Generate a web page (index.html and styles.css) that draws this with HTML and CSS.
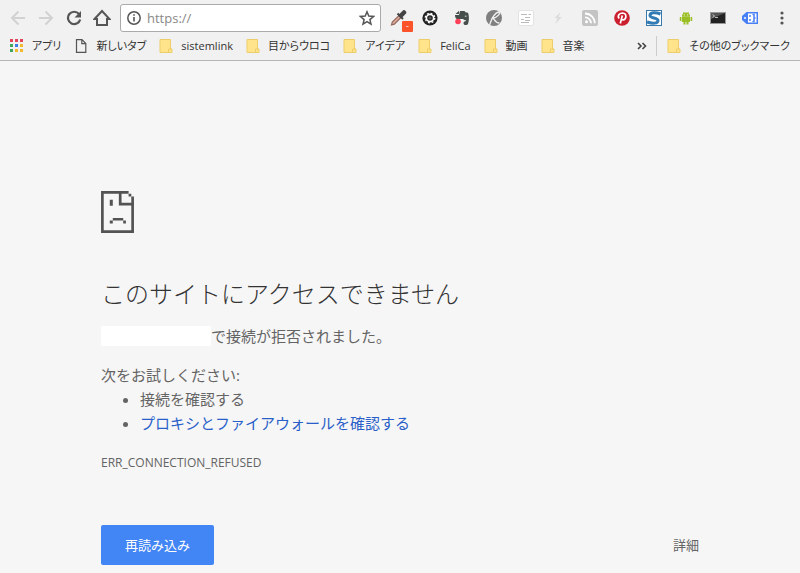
FILE: index.html
```
<!DOCTYPE html>
<html lang="ja">
<head>
    <meta charset="UTF-8">
    <meta name="viewport" content="width=device-width, initial-scale=1.0">
    <title>このサイトにアクセスできません</title>
    <link rel="stylesheet" href="styles.css">
</head>
<body>
    <svg class="symbols" width="0" height="0">
        <symbol id="folder" viewBox="0 0 14 14">
            <path d="M1 .5h10.500v9.500h1.500v3.500h-12z" fill="#ffe48b" stroke="#edcd6b"/>
            <path d="M9.500 13v-3h3" fill="none" stroke="#edcd6b"/>
        </symbol>
    </svg>

    <header>
        <div class="toolbar">
            <button class="nav-button" aria-label="戻る">
                <svg width="16" height="16" viewBox="0 0 16 16"><path d="M15 8H2M8.500 1.500L2 8l6.500 6.500" fill="none" stroke="#d2d2d2" stroke-width="2"/></svg>
            </button>
            <button class="nav-button" aria-label="進む">
                <svg width="16" height="16" viewBox="0 0 16 16"><path d="M1 8h13M7.500 1.500L14 8l-6.500 6.500" fill="none" stroke="#d2d2d2" stroke-width="2"/></svg>
            </button>
            <button class="nav-button" aria-label="再読み込み">
                <svg width="16" height="16" viewBox="0 0 16 16"><path d="M13 4A6.200 6.200 0 1 0 14.200 9.500" fill="none" stroke="#555" stroke-width="2.200"/><path d="M15 1v6.500H8.500z" fill="#555"/></svg>
            </button>
            <button class="nav-button" aria-label="ホーム">
                <svg width="18" height="18" viewBox="0 0 18 18"><path d="M1.500 10L9 2l7.500 8H14v6H4v-6z" fill="none" stroke="#555" stroke-width="2"/></svg>
            </button>

            <div class="address-bar">
                <svg width="14" height="14" viewBox="0 0 14 14"><circle cx="7" cy="7" r="6.200" fill="none" stroke="#555" stroke-width="1.500"/><path d="M7 6v4.500M7 3.200v1.600" stroke="#555" stroke-width="1.600"/></svg>
                <input type="text" value="https://" aria-label="アドレス">
                <button class="star-button" aria-label="ブックマークに追加">
                    <svg width="16" height="16" viewBox="0 0 16 16"><path d="M8 1.800l1.800 4.300 4.700.4-3.600 3.100 1.100 4.600L8 11.700l-4 2.500 1.100-4.600L1.500 6.500l4.700-.4z" fill="none" stroke="#555" stroke-width="1.500"/></svg>
                </button>
            </div>

            <div class="extensions">
                <button class="extension" aria-label="カラーピッカー">
                    <svg width="18" height="18" viewBox="0 0 18 18"><path d="M2.500 16l.8-3 6.700-6.500 2 2-6.700 6.700z" fill="#dcaa9c" stroke="#94685c" stroke-width="1.200"/><path d="M8.500 4.500l5.500 5.500" stroke="#444" stroke-width="2"/><path d="M12 6.500L15 3.500" stroke="#444" stroke-width="4.500" stroke-linecap="round"/></svg>
                    <span class="badge">-</span>
                </button>
                <button class="extension" aria-label="設定">
                    <svg width="16" height="16" viewBox="0 0 16 16"><circle cx="8" cy="8" r="7.600" fill="#222"/><circle cx="8" cy="8" r="3.600" fill="none" stroke="#fff" stroke-width="1.600"/><circle cx="8" cy="8" r="4.800" fill="none" stroke="#fff" stroke-width="1.200" stroke-dasharray="1.900 1.870"/><circle cx="8" cy="8" r="1.600" fill="#555"/></svg>
                </button>
                <button class="extension" aria-label="クリップ">
                    <svg width="16" height="16" viewBox="0 0 16 16"><path d="M6 1h4.500l1 1.200 2.500.6c1.300 3 1.200 8.500 0 11.200-1 1.700-4.500 1.400-4.500-.8 0-1.600 1-2 2.200-2V10c-1.500.3-2-.5-2.700-1H3C1.500 8.500 1 6.500 1 5h4z" fill="#474f4c"/><path d="M1.500 4L5 .8V4z" fill="#474f4c"/><path d="M10.800 6.200h1.700" stroke="#d5d5d5"/><circle cx="4" cy="11.500" r="2.800" fill="#ff4058"/></svg>
                </button>
                <button class="extension" aria-label="ライブラリ">
                    <svg width="18" height="18" viewBox="0 0 18 18"><circle cx="9" cy="9" r="8" fill="#808080"/><path d="M4.500 16C6.500 10 9 4 13.500 3c2.500.5 0 5.500-7 6.500M8.500 9.500c1.500 2 2.500 4.500 6 4.500" fill="none" stroke="#f0f0f0" stroke-width="1.300"/></svg>
                </button>
                <button class="extension" aria-label="リーダー">
                    <svg width="16" height="16" viewBox="0 0 16 16"><rect x=".5" y=".5" width="15" height="15" rx="1.500" fill="#fff" stroke="#e3e3e3"/><path d="M3 4.500h6M10.500 4.500H13M7 7.500h5M3 9.500h3M7 10.500h5M3 12.500h8" stroke="#bbb"/></svg>
                </button>
                <button class="extension" aria-label="高速表示">
                    <svg width="16" height="16" viewBox="0 0 16 16"><path d="M10.500 2l-6 6h3L5 14l7-7H8.500z" fill="#dcdcdc"/></svg>
                </button>
                <button class="extension" aria-label="フィード">
                    <svg width="16" height="16" viewBox="0 0 16 16"><rect width="16" height="16" rx="2" fill="#c4c4c4"/><circle cx="4.500" cy="11.800" r="1.500" fill="#fff"/><path d="M3 7.300a6 6 0 0 1 6 6M3 3.500a9.800 9.800 0 0 1 9.800 9.800" fill="none" stroke="#fff" stroke-width="1.800"/></svg>
                </button>
                <button class="extension" aria-label="ピン">
                    <svg width="16" height="16" viewBox="0 0 16 16"><circle cx="8" cy="8" r="7.800" fill="#cb1f2e"/><path d="M6.300 13.500L8.300 5.500M5 8.500C3 5 6 3 8.500 3c5 .3 3.800 7 .5 6.800-1 0-1.500-.6-1.700-1" fill="none" stroke="#fff" stroke-width="1.700"/></svg>
                </button>
                <button class="extension" aria-label="スタイル">
                    <svg width="16" height="16" viewBox="0 0 16 16"><rect x=".5" y=".5" width="15" height="15" fill="#fff" stroke="#3779ad"/><path d="M14.500 4C9 1.800 4 2.500 4 5.500s8 2 8 5-5 3.500-11 1.500" fill="none" stroke="#327bb5" stroke-width="3"/></svg>
                </button>
                <button class="extension" aria-label="アンドロイド">
                    <svg width="14" height="14" viewBox="0 0 14 14"><path d="M3 5.200a4 3.700 0 0 1 8 0zM3 5.500h8V11H9.500v2.500h-2V11h-1v2.500h-2V11H3zM.8 6h1.600v4H.8zM11.600 6h1.600v4h-1.600z" fill="#99bf24"/><path d="M4.500 1l1 1.500M9.500 1l-1 1.500" stroke="#99bf24"/><circle cx="5.300" cy="3.800" r=".6" fill="#fff"/><circle cx="8.700" cy="3.800" r=".6" fill="#fff"/></svg>
                </button>
                <button class="extension" aria-label="ターミナル">
                    <svg width="16" height="12" viewBox="0 0 16 12"><rect x=".5" y=".5" width="15" height="11" fill="#222" stroke="#999"/><path d="M1 1h14L1 7z" fill="#555"/><path d="M2.500 2.500l2 1.500-2 1.500M5 5.500h3" fill="none" stroke="#ddd" stroke-width=".8"/></svg>
                </button>
                <button class="extension" aria-label="タグ">
                    <svg width="16" height="12" viewBox="0 0 16 12"><path d="M4.500 0H16v12H4.500L0 8V4z" fill="#4a80f5"/><path d="M6 1.500h8.500v9H6z" fill="#fff"/><circle cx="3" cy="6" r="1" fill="#fff"/><path d="M8 3v2M8 7v2M10.500 2.500H12v7h-1.500M12 6h1.500" fill="none" stroke="#4a80f5" stroke-width="1.500"/></svg>
                </button>
                <button class="extension" aria-label="メニュー">
                    <svg width="4" height="14" viewBox="0 0 4 14"><circle cx="2" cy="2" r="1.600" fill="#555"/><circle cx="2" cy="7" r="1.600" fill="#555"/><circle cx="2" cy="12" r="1.600" fill="#555"/></svg>
                </button>
            </div>
        </div>

        <nav class="bookmarks">
            <a href="#">
                <svg width="14" height="14" viewBox="0 0 14 14"><path d="M0 0h3v3H0zM5 0h3v3H5zM10 0h3v3h-3z" fill="#e2445c"/><path d="M0 5h3v3H0zM0 10h3v3H0z" fill="#3fa65c"/><path d="M5 5h3v3H5z" fill="#3d7de8"/><path d="M10 5h3v3h-3zM5 10h3v3H5zM10 10h3v3h-3z" fill="#f2b92f"/></svg>
                アプリ
            </a>
            <a href="#">
                <svg width="14" height="14" viewBox="0 0 14 14"><path d="M2.500.7h5.500l3.800 3.800v8.800H2.500zM7.800.7v4h4" fill="none" stroke="#555" stroke-width="1.200"/></svg>
                新しいタブ
            </a>
            <a href="#"><svg width="14" height="14"><use href="#folder"/></svg>sistemlink</a>
            <a href="#"><svg width="14" height="14"><use href="#folder"/></svg>目からウロコ</a>
            <a href="#"><svg width="14" height="14"><use href="#folder"/></svg>アイデア</a>
            <a href="#"><svg width="14" height="14"><use href="#folder"/></svg>FeliCa</a>
            <a href="#"><svg width="14" height="14"><use href="#folder"/></svg>動画</a>
            <a href="#"><svg width="14" height="14"><use href="#folder"/></svg>音楽</a>
            <button class="more-button" aria-label="その他">
                <svg width="10" height="8" viewBox="0 0 10 8"><path d="M1 1l3 3-3 3M5.500 1l3 3-3 3" fill="none" stroke="#444" stroke-width="1.600"/></svg>
            </button>
            <a class="other" href="#"><svg width="14" height="14"><use href="#folder"/></svg>その他のブックマーク</a>
        </nav>
    </header>

    <main>
        <!-- sad page icon -->
        <svg width="33" height="42" viewBox="0 0 98 125">
            <path d="M0 0h82v8H61v27h37v90H0zM8 8v109h82V43H53V8z" fill="#535353" fill-rule="evenodd"/>
            <path d="M82 8h8v8h8v27h-8V16h-8zM26 26h9v18h-9zM35 80h31v8H35zM26 88h9v9h-9zM66 88h8v9h-8z" fill="#535353"/>
        </svg>
        <h1>このサイトにアクセスできません</h1>
        <p><span class="host"></span>で接続が拒否されました。</p>
        <p class="suggestions-title">次をお試しください:</p>
        <ul>
            <li>接続を確認する</li>
            <li><a href="#">プロキシとファイアウォールを確認する</a></li>
        </ul>
        <div class="error-code">ERR_CONNECTION_REFUSED</div>
        <div class="buttons">
            <button class="reload-button">再読み込み</button>
            <button class="details-button">詳細</button>
        </div>
    </main>
</body>
</html>
```
FILE: styles.css
```
* {
    box-sizing: border-box;
}
body {
    margin: 0;
    background: #f6f6f6;
    color: #646464;
    font-family: "Open Sans", "Noto Sans CJK JP", sans-serif;
    font-size: 15px;
    line-height: 24px;
}
button {
    padding: 0;
    border: none;
    background: none;
    font-family: inherit;
    cursor: pointer;
}
svg {
    display: block;
    flex-shrink: 0;
}
.symbols {
    position: absolute;
}

/* browser toolbar */
header {
    background: #f1f1f1;
    border-bottom: 1px solid #b6b6b6;
}
.toolbar {
    display: flex;
    align-items: center;
    height: 36px;
    padding: 0 2px 0 4px;
}
.nav-button {
    display: flex;
    align-items: center;
    justify-content: center;
    width: 28px;
    height: 28px;
}
.address-bar {
    display: flex;
    flex: 1;
    align-items: center;
    gap: 6px;
    min-width: 0;
    height: 28px;
    margin: 0 1px 0 4px;
    padding: 0 5px 0 6px;
    background: #fff;
    border: 1px solid #aaa;
    border-radius: 3px;
}
.address-bar input {
    flex: 1;
    min-width: 0;
    padding: 0;
    border: none;
    outline: none;
    background: none;
    color: #888;
    font-family: inherit;
    font-size: 13px;
}
.extensions {
    display: flex;
}
.extension {
    position: relative;
    display: flex;
    align-items: center;
    justify-content: center;
    width: 32px;
    height: 28px;
}
.badge {
    position: absolute;
    right: 1px;
    bottom: 0;
    width: 11px;
    height: 11px;
    background: #fb542b;
    border-radius: 1px;
    color: #fff;
    font-size: 9px;
    line-height: 10px;
}

/* bookmarks bar */
.bookmarks {
    display: flex;
    align-items: center;
    gap: 13px;
    height: 24px;
    padding: 0 10px 4px;
    font-size: 11px;
    font-feature-settings: "palt";
    line-height: 20px;
    white-space: nowrap;
}
.bookmarks a {
    display: flex;
    align-items: center;
    gap: 8px;
    color: #333;
    text-decoration: none;
}
.more-button {
    margin-left: auto;
}
.bookmarks .other {
    margin-left: -4px;
    padding-left: 10px;
    border-left: 1px solid #ccc;
}

/* error page */
main {
    max-width: 600px;
    margin: 0 auto;
    padding: 130px 1px 8px;
}
h1 {
    margin: 43px 0 12px;
    color: #333;
    font-size: 24px;
    font-weight: 300;
    line-height: 36px;
}
p {
    display: flex;
    align-items: center;
    margin: 0;
}
.host {
    width: 110px;
    height: 20px;
    background: #fff;
}
.suggestions-title {
    margin-top: 15px;
}
ul {
    margin: 0;
    padding-left: 39px;
}
li a {
    color: #2a5fc9;
    text-decoration: none;
}
.error-code {
    margin-top: 16px;
    font-size: 12px;
}
.buttons {
    display: flex;
    align-items: center;
    justify-content: space-between;
    margin-top: 50px;
}
.reload-button {
    height: 40px;
    padding: 0 24px 2px;
    background: #4285f4;
    border-radius: 2px;
    color: #fff;
    font-size: 13px;
}
.details-button {
    padding-bottom: 2px;
    color: #646464;
    font-size: 13px;
}
```
